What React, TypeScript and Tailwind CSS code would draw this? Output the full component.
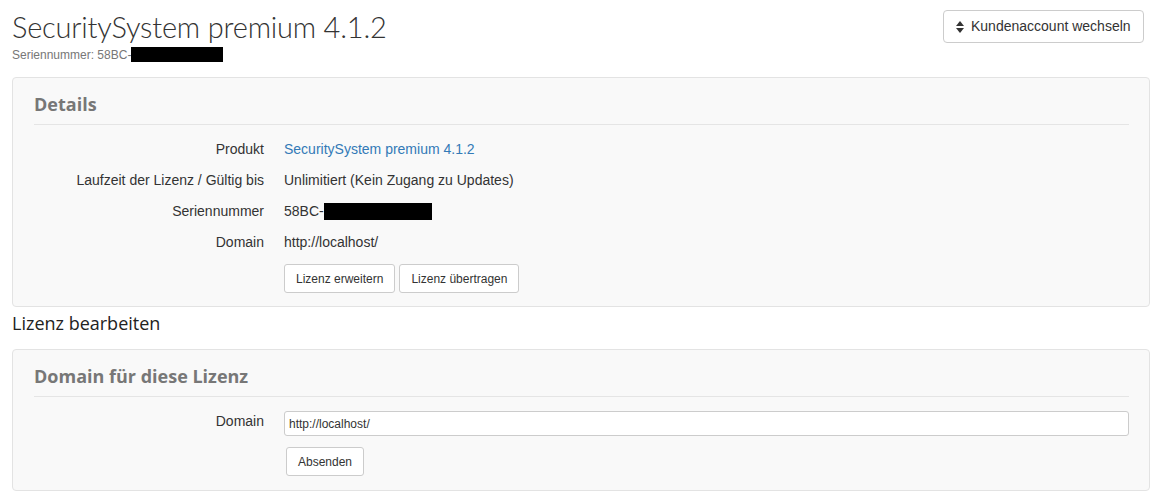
import React from "react";

const arial = { fontFamily: '"Liberation Sans", Arial, sans-serif' };
const head = { fontFamily: '"Open Sans", "Noto Sans", sans-serif' };

function Row({ label, children }: { label: string; children: React.ReactNode }) {
  return (
    <div className="flex items-center h-[31px]">
      <div className="w-[250px] text-right pr-[20px] text-[14px] text-[#333]">{label}</div>
      <div className="text-[14px] text-[#333] flex items-center">{children}</div>
    </div>
  );
}

export default function App() {
  return (
    <div className="w-[1150px] h-[500px] bg-white overflow-hidden relative" style={arial}>
      <div className="flex justify-between pl-[12px] pr-[6px]">
        <div>
          <h1 className="text-[29px] font-light text-[#333] leading-none pt-[12px] tracking-[-0.2px]" style={{ fontFamily: 'Lato, sans-serif' }}>
            SecuritySystem premium 4.1.2
          </h1>
          <div className="text-[12px] text-[#777] mt-[6px] flex items-center h-[15px]">
            Seriennummer: 58BC-<span className="inline-block w-[92px] h-[15px] bg-black"></span>
          </div>
        </div>
        <button className="mt-[10px] h-[33px] w-[201px] border border-[#ccc] rounded-[4px] bg-white flex items-center px-[12px] gap-[7px] text-[14px] text-[#333]">
          <svg width="8" height="12" viewBox="0 0 8 12">
            <path d="M4 0 L8 5 H0 Z" fill="#333" />
            <path d="M0 7 H8 L4 12 Z" fill="#333" />
          </svg>
          Kundenaccount wechseln
        </button>
      </div>

      <div className="ml-[12px] mt-[15px] border border-[#e3e3e3] rounded-[4px] bg-[#f9f9f9] pl-[21px] pr-[20px] pt-[14px] pb-[13px]">
        <div className="text-[18px] font-bold text-[#777] pb-[8px] border-b border-[#e5e5e5] leading-[24px]" style={head}>
          Details
        </div>
        <div className="mt-[9px]">
          <Row label="Produkt">
            <span className="text-[#337ab7]">SecuritySystem premium 4.1.2</span>
          </Row>
          <Row label="Laufzeit der Lizenz / Gültig bis">Unlimitiert (Kein Zugang zu Updates)</Row>
          <Row label="Seriennummer">
            58BC-<span className="inline-block w-[108px] h-[17px] bg-black"></span>
          </Row>
          <Row label="Domain">http://localhost/</Row>
        </div>
        <div className="flex gap-[4px] pl-[250px] mt-[6px]">
          <button className="h-[29px] px-[11px] border border-[#ccc] rounded-[3px] bg-white text-[12px] text-[#333]">Lizenz erweitern</button>
          <button className="h-[29px] px-[11px] border border-[#ccc] rounded-[3px] bg-white text-[12px] text-[#333]">Lizenz übertragen</button>
        </div>
      </div>

      <div className="pl-[12px] pt-[4px] text-[18px] text-[#222] leading-[24px]" style={head}>Lizenz bearbeiten</div>

      <div className="ml-[12px] mt-[14px] border border-[#e3e3e3] rounded-[4px] bg-[#f9f9f9] pl-[21px] pr-[20px] pt-[14px] pb-[14px]">
        <div className="text-[18px] font-bold text-[#777] pb-[8px] border-b border-[#e5e5e5] leading-[24px]" style={head}>
          Domain für diese Lizenz
        </div>
        <div className="flex items-center mt-[14px]">
          <div className="w-[250px] text-right pr-[20px] text-[14px] text-[#333] -mt-[4px]">Domain</div>
          <input
            readOnly
            value="http://localhost/"
            className="flex-1 h-[25px] border border-[#ccc] rounded-[3px] bg-white px-[4px] text-[12px] text-[#333] outline-none"
            style={arial}
          />
        </div>
        <div className="pl-[252px] mt-[11px]">
          <button className="h-[29px] w-[78px] border border-[#ccc] rounded-[3px] bg-white text-[12px] text-[#333]">Absenden</button>
        </div>
      </div>
    </div>
  );
}
